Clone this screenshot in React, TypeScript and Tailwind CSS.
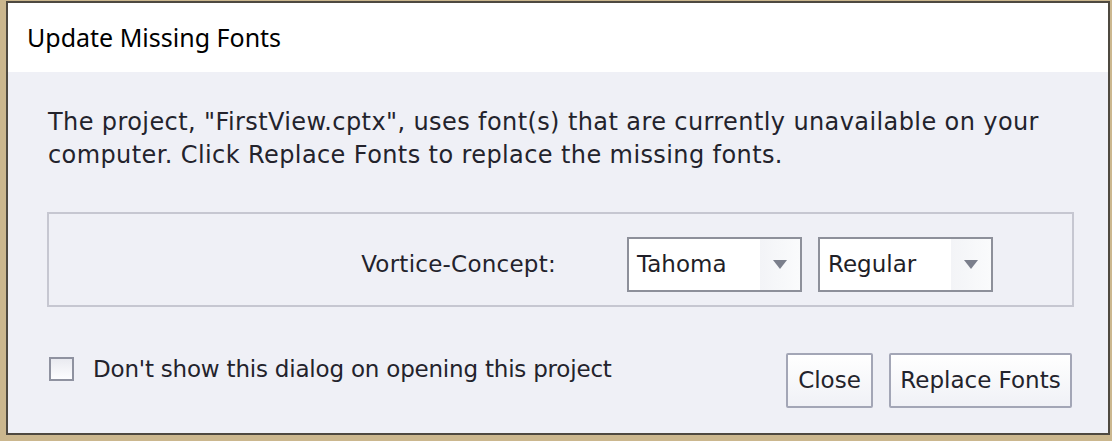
import React from "react";

const bodyFont = { fontFamily: '"DejaVu Sans", sans-serif' };

function Arrow() {
  return (
    <svg width="14" height="9" viewBox="0 0 14 9">
      <polygon points="0,0 14,0 7,9" fill="#7b7f8c" />
    </svg>
  );
}

function Select({ value }: { value: string }) {
  return (
    <div className="w-[175px] h-[55px] border-2 border-[#8d909a] bg-white flex">
      <div className="flex-1 flex items-center pl-[8px] text-[23px] text-[#1f1f28]" style={bodyFont}>
        {value}
      </div>
      <div className="w-[40px] h-full flex items-center justify-center bg-gradient-to-r from-[#f3f4f7] to-[#fafbfc]">
        <Arrow />
      </div>
    </div>
  );
}

export default function App() {
  return (
    <div className="w-[1112px] h-[441px] bg-[#cbb78e] pt-[1px] pl-[6px]">
      <div className="w-[1104px] h-[434px] border-2 border-[#4e4940] flex flex-col">
        <div
          className="h-[69px] bg-white flex items-center pl-[19px] text-[25px] text-black"
          style={{ fontFamily: '"Noto Sans", "Open Sans", sans-serif' }}
        >
          Update Missing Fonts
        </div>
        <div className="flex-1 bg-[#eff0f6] flex flex-col pl-[39px] pr-[34px]">
          <p className="mt-[34px] pl-[1px] text-[24px] leading-[33px] tracking-[0.4px] text-[#23232c]" style={bodyFont}>
            The project, "FirstView.cptx", uses font(s) that are currently unavailable on your
            <br />
            computer. Click Replace Fonts to replace the missing fonts.
          </p>
          <div className="mt-[40px] h-[95px] border-2 border-[#c6c7d1] flex items-center justify-end pr-[79px] pt-[10px]">
            <span className="mr-[71px] text-[23px] tracking-[0.25px] text-[#23232c]" style={bodyFont}>
              Vortice-Concept:
            </span>
            <Select value="Tahoma" />
            <div className="w-[16px]" />
            <Select value="Regular" />
          </div>
          <div className="flex mt-[46px] items-start">
            <div className="flex items-center mt-[-1px] ml-[2px]">
              <div className="w-[25px] h-[24px] border-2 border-[#8f92a0] bg-gradient-to-b from-[#e9eaf0] to-[#fdfdff]" />
              <span className="ml-[19px] text-[23px] tracking-[-0.2px] text-[#23232c]" style={bodyFont}>
                Don't show this dialog on opening this project
              </span>
            </div>
            <div className="ml-auto flex gap-[16px] mr-[2px]">
              <button className="w-[87px] h-[55px] border-2 border-[#a3a6b6] rounded-[2px] bg-gradient-to-b from-white to-[#f0f1f6] text-[23px] text-[#23232c]" style={bodyFont}>
                Close
              </button>
              <button className="w-[183px] h-[55px] border-2 border-[#a3a6b6] rounded-[2px] bg-gradient-to-b from-white to-[#f0f1f6] text-[23px] text-[#23232c]" style={bodyFont}>
                Replace Fonts
              </button>
            </div>
          </div>
        </div>
      </div>
    </div>
  );
}
